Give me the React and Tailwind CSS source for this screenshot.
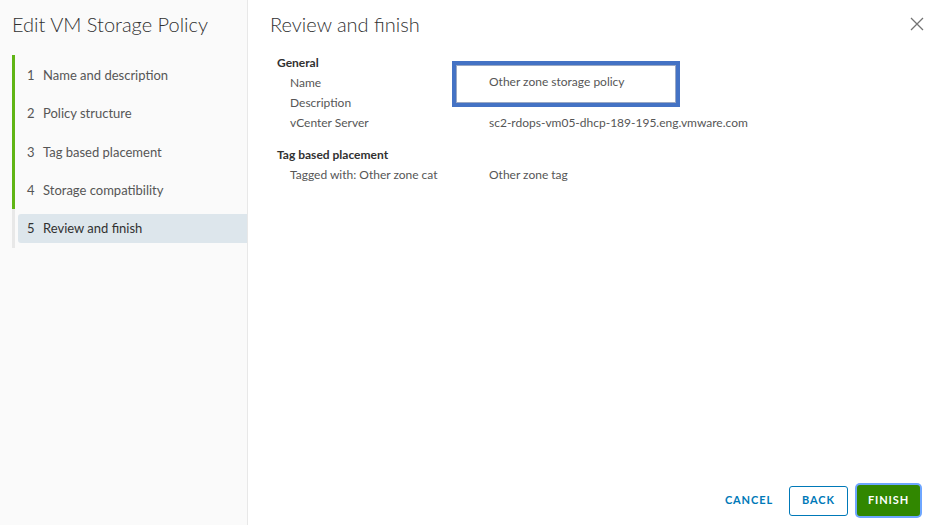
export default function App() {
  const steps = [
    'Name and description',
    'Policy structure',
    'Tag based placement',
    'Storage compatibility',
  ]
  return (
    <div className="flex h-[525px] w-[933px] bg-white text-[#333]" style={{ fontFamily: 'Lato, "Noto Sans", sans-serif' }}>
      {/* sidebar */}
      <div className="flex w-[248px] flex-col border-r border-[#e8e8e8] bg-[#fafafa]">
        <h1 className="pl-3 pt-[10px] text-[20px] font-light leading-[28px] text-[#313131]">Edit VM Storage Policy</h1>
        <div className="mt-[17px] flex">
          <div className="ml-3 flex w-[3px] flex-col">
            <div className="h-[154px] bg-[#60b515]" />
            <div className="h-[39px] bg-[#e8e8e8]" />
          </div>
          <div className="flex flex-1 flex-col pt-[1px]">
            {steps.map((s, i) => (
              <div key={s} className="flex h-[38.5px] items-center pl-[12px] text-[13px] text-[#565656]">
                <span className="w-[16px]">{i + 1}</span>
                <span>{s}</span>
              </div>
            ))}
            <div className="ml-[3px] mt-[4px] flex h-[29px] items-center rounded-l-[3px] bg-[#dde6ec] pl-[9px] text-[13px] text-[#313131]">
              <span className="w-[16px]">5</span>
              <span>Review and finish</span>
            </div>
          </div>
        </div>
      </div>

      {/* main */}
      <div className="flex flex-1 flex-col">
        <div className="flex items-start justify-between pl-[22px] pr-[7px] pt-[10px]">
          <h2 className="text-[20px] font-light leading-[28px] text-[#313131]">Review and finish</h2>
          <button className="mt-[5px] p-[2px] text-[#737373]">
            <svg width="14" height="14" viewBox="0 0 14 14" fill="none" stroke="currentColor" strokeWidth="1.3">
              <path d="M1 1l12 12M13 1L1 13" />
            </svg>
          </button>
        </div>

        <div className="mt-[15px] pl-[29px] text-[12px] text-[#565656]">
          <div className="font-bold leading-[20px] text-[#313131]">General</div>
          <div className="grid grid-cols-[212px_1fr] leading-[20px]">
            <div className="pl-[13px]">Name</div>
            <div className="relative h-[20px]">
              {/* highlight annotation drawn over the value */}
              <div className="absolute left-[-37px] top-[-12px] h-[46px] w-[228px] border-[4px] border-[#4472c4] bg-white">
                <div className="flex h-full items-center border border-[#9aa8c4] pb-[4px] pl-[32px] leading-[20px]">Other zone storage policy</div>
              </div>
            </div>
            <div className="pl-[13px]">Description</div>
            <div />
            <div className="pl-[13px]">vCenter Server</div>
            <div>sc2-rdops-vm05-dhcp-189-195.eng.vmware.com</div>
          </div>
          <div className="mt-[12px] font-bold leading-[20px] text-[#313131]">Tag based placement</div>
          <div className="grid grid-cols-[212px_1fr] leading-[20px]">
            <div className="pl-[13px]">Tagged with: Other zone cat</div>
            <div>Other zone tag</div>
          </div>
        </div>

        <div className="mt-auto flex items-center justify-end pb-[9px] pr-[13px]">
          <button className="h-[30px] px-[12px] text-[11px] font-bold tracking-[0.9px] text-[#0079b8]">CANCEL</button>
          <button className="ml-[4px] h-[30px] w-[59px] rounded-[3px] border border-[#0079b8] text-[11px] font-bold tracking-[0.9px] text-[#0079b8]">BACK</button>
          <button className="ml-[9px] h-[31px] w-[63px] rounded-[3px] bg-[#318700] text-[11px] font-bold tracking-[0.9px] text-white ring-2 ring-[#6ea6ff]">FINISH</button>
        </div>
      </div>
    </div>
  )
}
